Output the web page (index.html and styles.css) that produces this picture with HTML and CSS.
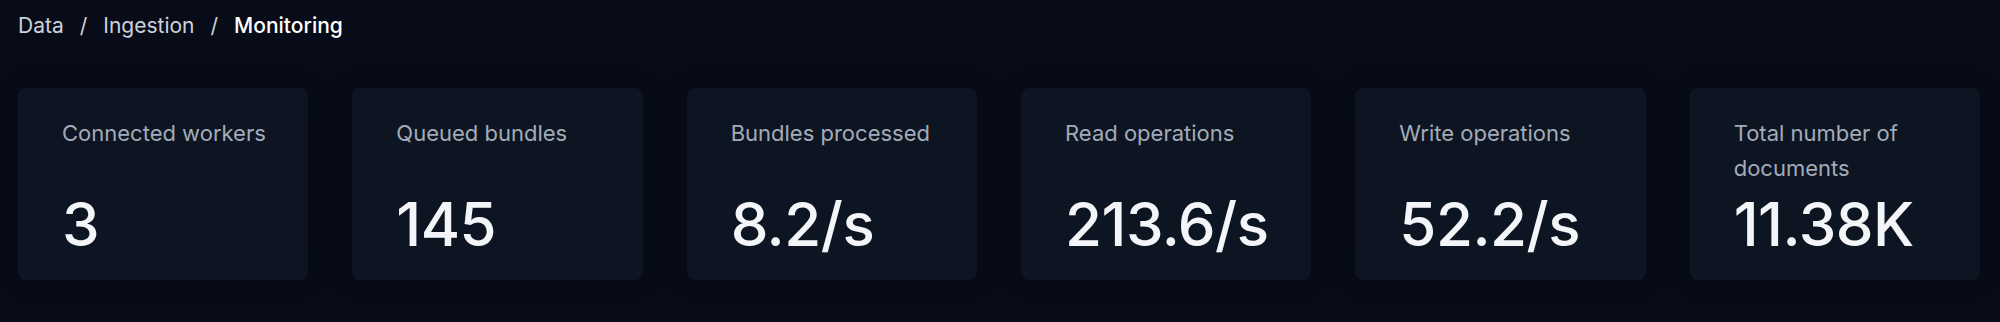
FILE: index.html
```html
<!DOCTYPE html>
<html lang="en">
<head>
  <meta charset="UTF-8" />
  <meta name="viewport" content="width=device-width, initial-scale=1.0"/>
  <title>Ingestion Monitoring</title>
  <link rel="stylesheet" href="styles.css">
</head>
<body>
  <!-- Breadcrumb -->
  <nav class="breadcrumb">
    <a href="#">Data</a>
    <span class="sep">/</span>
    <a href="#">Ingestion</a>
    <span class="sep">/</span>
    <span class="current">Monitoring</span>
  </nav>

  <!-- Stat tiles -->
  <div class="stats">
    <div class="stat-card">
      <div class="stat-label">Connected workers</div>
      <div class="stat-value">3</div>
    </div>
    <div class="stat-card">
      <div class="stat-label">Queued bundles</div>
      <div class="stat-value">145</div>
    </div>
    <div class="stat-card">
      <div class="stat-label">Bundles processed</div>
      <div class="stat-value">8.2/s</div>
    </div>
    <div class="stat-card">
      <div class="stat-label">Read operations</div>
      <div class="stat-value">213.6/s</div>
    </div>
    <div class="stat-card">
      <div class="stat-label">Write operations</div>
      <div class="stat-value">52.2/s</div>
    </div>
    <div class="stat-card">
      <div class="stat-label">Total number of documents</div>
      <div class="stat-value">11.38K</div>
    </div>
  </div>
</body>
</html>
```

FILE: styles.css
```css
body {
  margin: 0;
  padding: 12px 20px 0 18px;
  background: #080c18;
  font-family: Inter, "Noto Sans", Arial, sans-serif;
  color: #fff;
  height: 322px;
  box-sizing: border-box;
  overflow: hidden;
}

/* Breadcrumb */
.breadcrumb {
  display: flex;
  align-items: center;
  gap: 16px;
  font-size: 21px;
  line-height: 28px;
  color: #cdd2da;
}

.breadcrumb a {
  color: inherit;
  text-decoration: none;
}

.breadcrumb .current {
  color: #fff;
  font-weight: 500;
}

/* Stat grid */
.stats {
  display: grid;
  grid-template-columns: repeat(6, 1fr);
  gap: 44px;
  margin-top: 48px;
}

.stat-card {
  background: #0d1522;
  border-radius: 8px;
  padding: 28px 26px 26px 44px;
  box-shadow: 0 0 24px rgba(0, 0, 0, 0.35);
  display: flex;
  flex-direction: column;
  gap: 8px;
}

.stat-label {
  font-size: 22px;
  line-height: 35px;
  min-height: 70px;
  color: #a3abb8;
}

.stat-value {
  font-size: 60px;
  line-height: 60px;
  font-weight: 500;
  color: #f3f5f8;
  letter-spacing: -0.5px;
}
```
